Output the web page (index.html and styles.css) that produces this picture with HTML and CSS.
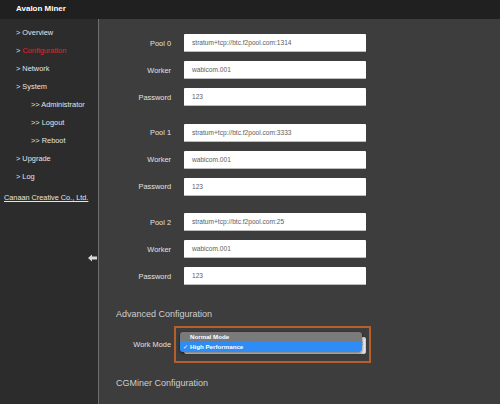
FILE: index.html
```html
<!DOCTYPE html>
<html>
<head>
<meta charset="utf-8">
<link rel="stylesheet" href="styles.css">
</head>
<body>
<div class="page">
  <header class="topbar">Avalon Miner</header>
  <div class="layout">
    <nav class="sidebar">
      <ul class="menu">
        <li class="item">&gt; Overview</li>
        <li class="item active">&gt; <span class="red">Configuration</span></li>
        <li class="item">&gt; Network</li>
        <li class="item">&gt; System</li>
        <li class="item sub">&gt;&gt; Administrator</li>
        <li class="item sub">&gt;&gt; Logout</li>
        <li class="item sub">&gt;&gt; Reboot</li>
        <li class="item">&gt; Upgrade</li>
        <li class="item">&gt; Log</li>
      </ul>
      <a class="company">Canaan Creative Co., Ltd.</a>
      <svg class="toggle" width="9" height="8" viewBox="0 0 9 8"><polygon points="0,4 4,0.5 4,2.5 9,2.5 9,5.5 4,5.5 4,7.5" fill="#d8d8d8"/></svg>
    </nav>
    <main class="content">
      <div class="group">
        <label class="lbl">Pool 0</label><div class="input">stratum+tcp://btc.f2pool.com:1314</div>
        <label class="lbl">Worker</label><div class="input">wabicom.001</div>
        <label class="lbl">Password</label><div class="input">123</div>
      </div>
      <div class="group">
        <label class="lbl">Pool 1</label><div class="input">stratum+tcp://btc.f2pool.com:3333</div>
        <label class="lbl">Worker</label><div class="input">wabicom.001</div>
        <label class="lbl">Password</label><div class="input">123</div>
      </div>
      <div class="group">
        <label class="lbl">Pool 2</label><div class="input">stratum+tcp://btc.f2pool.com:25</div>
        <label class="lbl">Worker</label><div class="input">wabicom.001</div>
        <label class="lbl">Password</label><div class="input">123</div>
      </div>
      <h2 class="section">Advanced Configuration</h2>
      <div class="group mode">
        <label class="lbl">Work Mode</label>
        <div class="highlight">
          <div class="selectbox"><span class="caret">&#8661;</span></div>
          <div class="popup">
            <div class="opt">Normal Mode</div>
            <div class="opt selected"><span class="check">&#10003;</span>High Performance</div>
          </div>
        </div>
      </div>
      <h2 class="section cg">CGMiner Configuration</h2>
    </main>
  </div>
</div>
</body>
</html>
```

FILE: styles.css
```css
html, body {
  margin: 0;
  padding: 0;
  height: 100%;
}
body {
  font-family: "Liberation Sans", Arial, Helvetica, sans-serif;
  background: #3d3d3d;
  color: #e0e0e0;
  overflow: hidden;
}
.page {
  display: flex;
  flex-direction: column;
  height: 404px;
}
.topbar {
  height: 19px;
  line-height: 18px;
  background: #202020;
  color: #ffffff;
  font-weight: bold;
  font-size: 8px;
  padding-left: 16px;
  flex: none;
}
.layout {
  flex: 1;
  display: flex;
}
.sidebar {
  position: relative;
  width: 98px;
  background: #2c2c2c;
  border-right: 1px solid #6e6e6e;
  flex: none;
  padding-top: 5px;
  box-sizing: content-box;
}
.menu {
  list-style: none;
  margin: 0;
  padding: 0;
}
.item {
  height: 18px;
  line-height: 18px;
  font-size: 7.4px;
  padding-left: 16px;
  color: #e4e4e4;
}
.item.sub {
  padding-left: 31px;
}
.red {
  color: #e3232a;
}
.company {
  display: block;
  margin-top: 3px;
  padding-left: 4px;
  height: 18px;
  line-height: 18px;
  font-size: 7.3px;
  color: #e4e4e4;
  text-decoration: underline;
}
.toggle {
  position: absolute;
  left: 88px;
  top: 235px;
}
.content {
  flex: 1;
  padding: 15px 0 0 17px;
}
.group {
  display: grid;
  grid-template-columns: 55px 182px;
  column-gap: 13px;
  row-gap: 9px;
  align-items: center;
  margin-bottom: 17.5px;
}
.lbl {
  text-align: right;
  font-size: 7.4px;
  color: #e2e2e2;
}
.input {
  height: 18px;
  line-height: 18px;
  background: #ffffff;
  border-bottom: 1px solid #bdbdbd;
  box-sizing: border-box;
  padding-left: 8px;
  font-size: 6.6px;
  color: #5e5e5e;
  border-radius: 1px;
}
.section {
  margin: 23px 0 6px 0;
  font-size: 9px;
  font-weight: normal;
  line-height: 12px;
  color: #cfcfcf;
}
.section.cg {
  margin-top: 14px;
}
.group.mode {
  margin-bottom: 0;
}
.highlight {
  position: relative;
  margin-left: -10px;
  width: 197px;
  box-sizing: border-box;
  border: 2px solid #b55f2a;
  padding: 9px 3px 7px 8px;
}
.selectbox {
  height: 17px;
  width: 182px;
  background: #e9e9e9;
  border-radius: 3px;
  position: relative;
  box-shadow: inset 0 0 0 1px #cfcfcf;
}
.caret {
  position: absolute;
  right: 2px;
  top: 3px;
  font-size: 7px;
  color: #333;
}
.popup {
  position: absolute;
  left: 4px;
  top: 4px;
  width: 182px;
  border-radius: 3px;
  overflow: hidden;
  box-shadow: 0 1px 3px rgba(0, 0, 0, 0.6);
}
.opt {
  height: 10px;
  line-height: 10px;
  background: #7a7a7a;
  color: #ffffff;
  font-weight: bold;
  font-size: 6.2px;
  padding-left: 10px;
  position: relative;
}
.opt.selected {
  background: #2f8cf4;
}
.check {
  position: absolute;
  left: 3px;
  font-weight: normal;
}
```
